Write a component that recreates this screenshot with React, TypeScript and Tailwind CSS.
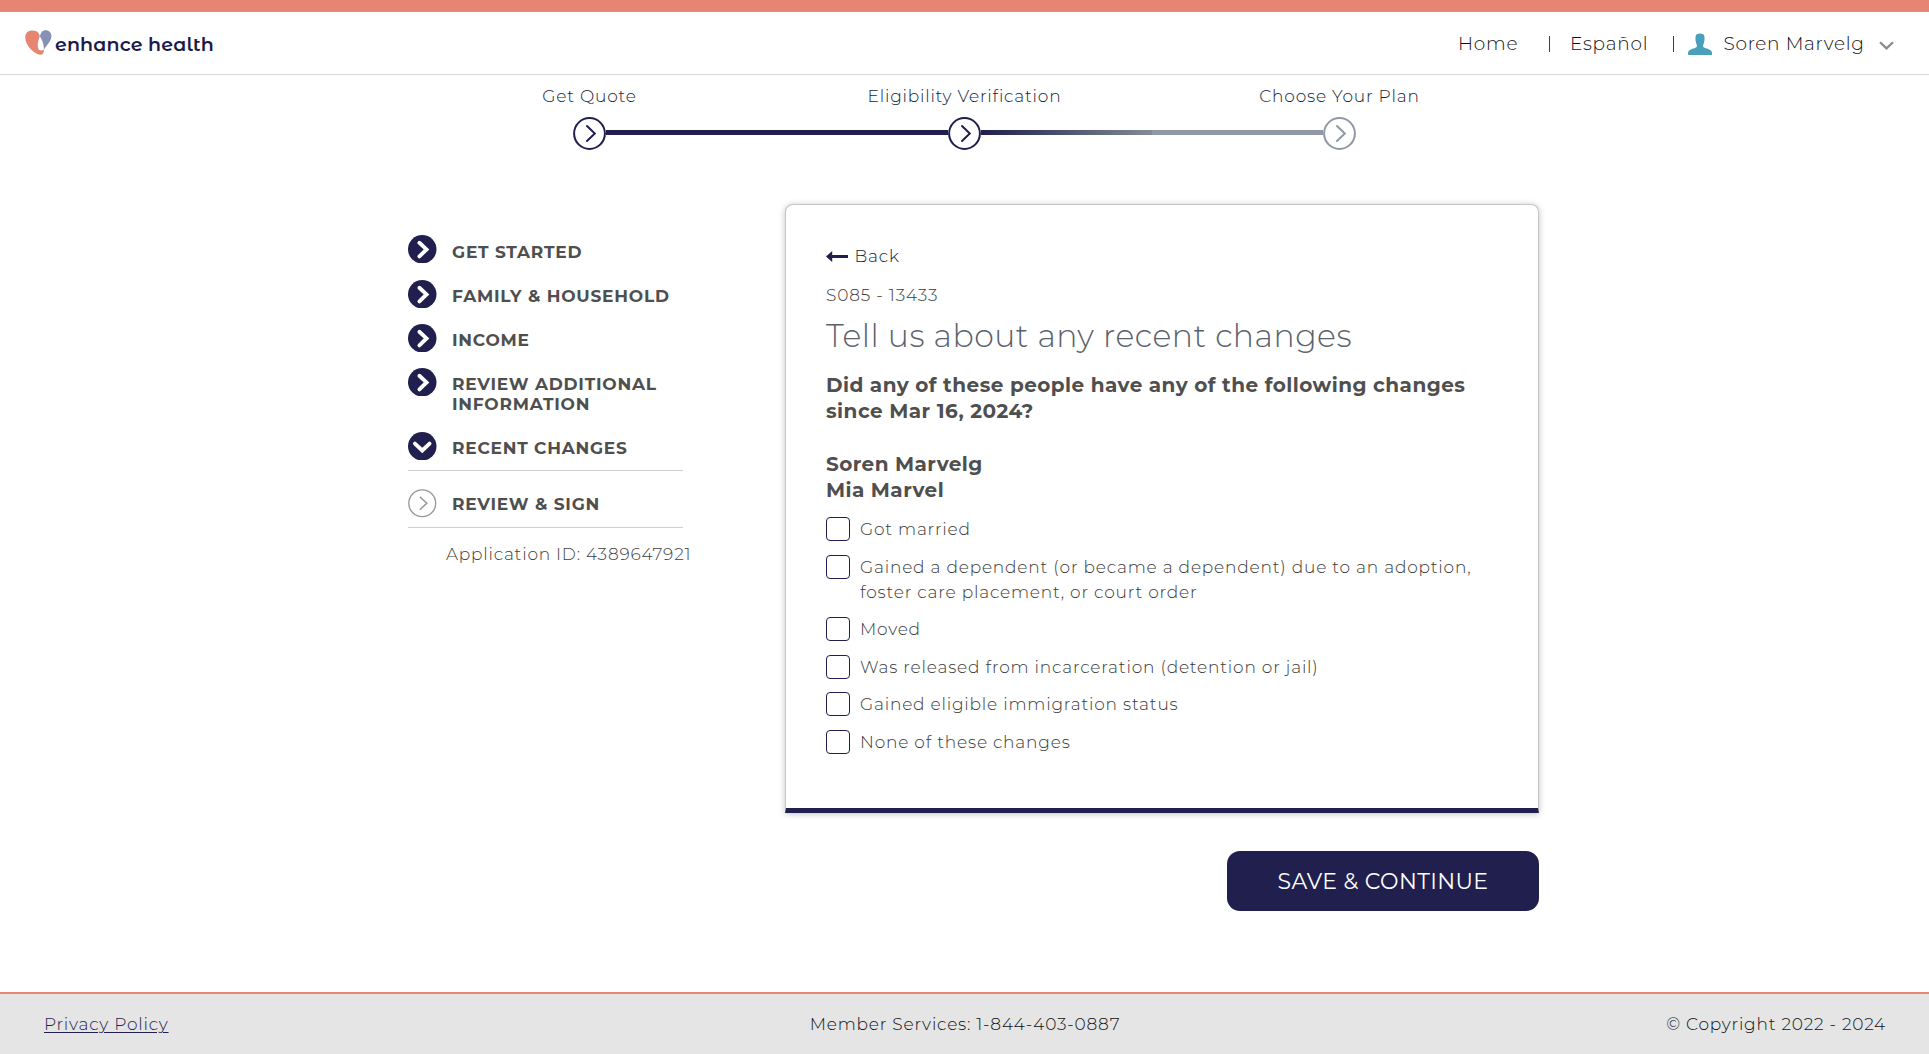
import type { ReactNode } from "react";

type StepState = "done" | "pending";

function Logo() {
  return (
    <div className="flex items-center">
      <svg className="-mt-[3px] h-[25px] w-[27px]" viewBox="0 0 27 25">
        <path
          d="M0.2 7.5C0.2 2.4 3.6 0.6 8 0.6C12 0.6 14.6 3.4 14.8 6.6C13.2 9.6 12.6 14 12.9 17.2C13.2 20.2 15.8 21.6 19 19.4C19 22.6 17.8 24.8 15.3 24.8C9.6 24.4 0.2 15.6 0.2 7.5Z"
          fill="#e68672"
        />
        <path
          d="M15 6.6C15.4 2.8 17.4 0.2 20.6 0.2C24 0.2 26.4 2.6 26.4 6C26.4 11.4 21.4 15.4 18.9 19.6C18.8 14.6 17.4 9.8 15 6.6Z"
          fill="#8790b5"
        />
      </svg>
      <span className="mt-px ml-[3px] font-['Montserrat_Alternates','Montserrat','Inter',sans-serif] text-[19px] leading-5 font-semibold tracking-[0.14px] text-[#1d1a4b]">
        enhance health
      </span>
    </div>
  );
}

function Header() {
  return (
    <header className="flex h-[63px] items-center justify-between border-b border-[#d6d7d9] pt-0.5 pr-[35px] pl-[25px]">
      <Logo />
      <nav className="flex items-center text-[18.5px] leading-6 font-[350] tracking-[0.75px] text-[#111111]">
        <a className="w-[90.5px]">Home</a>
        <span className="h-4 w-px bg-[#4c3350]" />
        <a className="ml-[20.5px] w-[102.5px]">Español</a>
        <span className="h-4 w-px bg-[#4c3350]" />
        <svg className="ml-[14px] h-[22px] w-6" viewBox="0 0 24 22">
          <path
            d="M7.6 3.2C7.8 1.2 9.6 0.4 12 0.4C14.4 0.4 16.2 1.2 16.4 3.2C16.7 6.4 16.4 9 15.4 11.4C15 12.6 15 13.6 15.6 14.2C18 15.6 21.6 16 23 17.6C24 18.8 24 20.4 24 22H0C0 20.4 0 18.8 1 17.6C2.4 16 6 15.6 8.4 14.2C9 13.6 9 12.6 8.6 11.4C7.6 9 7.3 6.4 7.6 3.2Z"
            fill="#4a9fba"
          />
        </svg>
        <span className="ml-[12px] w-[155.5px] tracking-[0.7px]">Soren Marvelg</span>
        <svg className="mt-0.5 h-[9px] w-[15px]" viewBox="0 0 15 9">
          <path d="M1 1.2L7.5 7.4L14 1.2" fill="none" stroke="#8a8a8a" strokeWidth="2.2" />
        </svg>
      </nav>
    </header>
  );
}

function StepCircle({ state }: { state: StepState }) {
  const color = state === "done" ? "#211f4d" : "#8f98a4";
  return (
    <svg className="h-[33px] w-[33px] shrink-0" viewBox="0 0 33 33" fill="none" stroke={color}>
      <circle cx="16.5" cy="16.5" r="15.4" strokeWidth="2" />
      <path d="M14 9L21.8 16.5L14 24" strokeWidth="2" strokeLinecap="round" />
    </svg>
  );
}

function Stepper() {
  return (
    <section className="flex flex-col items-center pt-[11px]">
      <div className="grid grid-cols-[375px_375px_375px] text-center text-[17px] leading-5 font-[350] tracking-[0.79px] text-[#141e40]">
        <span>Get Quote</span>
        <span>Eligibility Verification</span>
        <span>Choose Your Plan</span>
      </div>
      <div className="mt-[11px] flex w-[783px] items-center">
        <StepCircle state="done" />
        <div className="-mt-[2px] h-[5px] flex-1 bg-[#211f4d]" />
        <StepCircle state="done" />
        <div className="-mt-[2px] flex h-[5px] flex-1">
          <div className="flex-1 bg-linear-to-r from-[#211f4d] to-[#858b95]" />
          <div className="flex-1 bg-[#8f98a4]" />
        </div>
        <StepCircle state="pending" />
      </div>
    </section>
  );
}

function Bullet({ kind }: { kind: "right" | "down" | "outline" }) {
  if (kind === "outline") {
    return (
      <svg
        className="-mt-[5px] h-[28.5px] w-[28.5px] shrink-0"
        viewBox="0 0 28 28"
        fill="none"
        stroke="#979797"
      >
        <circle cx="14" cy="14" r="13.2" strokeWidth="1.3" />
        <path d="M11.6 7.6L18.4 14L11.6 20.4" strokeWidth="1.5" />
      </svg>
    );
  }
  return (
    <svg className="-mt-[6.5px] h-[28.5px] w-[28.5px] shrink-0" viewBox="0 0 28 28" fill="none">
      <circle cx="14" cy="14" r="14" fill="#211f4d" />
      <path
        d={kind === "right" ? "M11.2 7.6L18.2 14.2L11.2 21" : "M6.8 11.4L14 18.2L21.2 11.4"}
        stroke="#ffffff"
        strokeWidth="3.8"
        strokeLinecap="round"
      />
    </svg>
  );
}

function NavRow({ kind, children }: { kind: "right" | "down" | "outline"; children: ReactNode }) {
  return (
    <li className="flex items-start">
      <Bullet kind={kind} />
      <div className="ml-[15.5px] flex flex-col">{children}</div>
    </li>
  );
}

function Sidebar() {
  return (
    <aside className="w-[377px] pt-[38px] text-[#4f4f4f]">
      <ul className="w-[275px] text-[17px] leading-5 font-bold tracking-[0.77px] whitespace-nowrap">
        <div className="flex flex-col gap-6 border-b border-[#cfcfcf] pb-3 [&_svg]:-mb-2 [&>li:first-child>svg]:-mt-[7.5px]">
          <NavRow kind="right">
            <span>GET STARTED</span>
          </NavRow>
          <NavRow kind="right">
            <span>FAMILY &amp; HOUSEHOLD</span>
          </NavRow>
          <NavRow kind="right">
            <span>INCOME</span>
          </NavRow>
          <NavRow kind="right">
            <span>REVIEW ADDITIONAL</span>
            <span>INFORMATION</span>
          </NavRow>
          <NavRow kind="down">
            <span>RECENT CHANGES</span>
          </NavRow>
        </div>
        <div className="border-b border-[#cfcfcf] pt-[23px] pb-[13px] [&_svg]:-mb-3">
          <NavRow kind="outline">
            <span>REVIEW &amp; SIGN</span>
          </NavRow>
        </div>
      </ul>
      <p className="mt-4 pl-[38px] text-[17px] leading-5 font-[350] tracking-[0.78px] whitespace-nowrap text-[#404040]">
        Application ID: 4389647921
      </p>
    </aside>
  );
}

function Option({ children }: { children: ReactNode }) {
  return (
    <label className="flex items-start">
      <span className="h-6 w-6 shrink-0 rounded-[4px] border border-[#211f4d] bg-white" />
      <span className="ml-[10px] flex flex-col">{children}</span>
    </label>
  );
}

function QuestionCard() {
  return (
    <section className="h-[609px] rounded-t-lg border border-b-[5px] border-[#c6c6c6] border-b-[#211f4d] bg-white pt-[41px] pl-[40px] whitespace-nowrap text-[#3a3a3a] shadow-[0_1px_6px_rgba(0,0,0,0.25)]">
      <a className="flex h-5 items-center text-[17px] leading-5 font-[350] text-[#141a30]">
        <svg className="h-[11px] w-[22px]" viewBox="0 0 22 11">
          <path d="M0 5.5L6.2 0V4H22V7H6.2V11Z" fill="#211f4d" />
        </svg>
        <span className="ml-[6.5px] tracking-[0.8px]">Back</span>
      </a>
      <p className="mt-[19px] text-[17px] leading-5 font-[350] tracking-[0.84px]">S085 - 13433</p>
      <h1 className="mt-[11px] text-[31.5px] leading-10 font-[350] tracking-[0.5px] text-[#5b616b]">
        Tell us about any recent changes
      </h1>
      <div className="mt-4 flex flex-col text-[20px] leading-[26px] font-bold tracking-[0.45px] text-[#4f4f4f]">
        <span>Did any of these people have any of the following changes</span>
        <span>since Mar 16, 2024?</span>
      </div>
      <div className="mt-[27px] flex flex-col text-[20px] leading-[26px] font-bold tracking-[0.43px] text-[#4f4f4f]">
        <span>Soren Marvelg</span>
        <span>Mia Marvel</span>
      </div>
      <div className="mt-[14px] flex flex-col gap-[12.5px] text-[17px] leading-[25px] font-[350] tracking-[0.8px]">
        <Option>
          <span>Got married</span>
        </Option>
        <Option>
          <span>Gained a dependent (or became a dependent) due to an adoption,</span>
          <span>foster care placement, or court order</span>
        </Option>
        <Option>
          <span>Moved</span>
        </Option>
        <Option>
          <span>Was released from incarceration (detention or jail)</span>
        </Option>
        <Option>
          <span>Gained eligible immigration status</span>
        </Option>
        <Option>
          <span>None of these changes</span>
        </Option>
      </div>
    </section>
  );
}

function Footer() {
  return (
    <footer className="mt-auto grid h-[62px] grid-cols-3 items-center border-t-2 border-[#e68672] bg-[#e5e5e5] pr-[43px] pl-[44px] text-[17px] leading-6 font-[350] tracking-[0.78px] text-[#111111]">
      <a className="justify-self-start text-[#211f4d] underline decoration-1 underline-offset-2">
        Privacy Policy
      </a>
      <span className="justify-self-center">Member Services: 1-844-403-0887</span>
      <span className="justify-self-end">© Copyright 2022 - 2024</span>
    </footer>
  );
}

export default function App() {
  return (
    <div className="flex h-[1054px] w-full flex-col overflow-hidden bg-white font-['Montserrat','Inter',sans-serif]">
      <div className="h-3 shrink-0 bg-[#e68672]" />
      <Header />
      <Stepper />
      <main className="mt-[54px] flex pl-[408px]">
        <Sidebar />
        <div className="flex w-[754px] flex-col">
          <QuestionCard />
          <button className="mt-[38px] h-[60px] w-[312px] self-end rounded-[13px] bg-[#211f4d] text-[22px] tracking-[0.4px] text-white">
            SAVE &amp; CONTINUE
          </button>
        </div>
      </main>
      <Footer />
    </div>
  );
}
